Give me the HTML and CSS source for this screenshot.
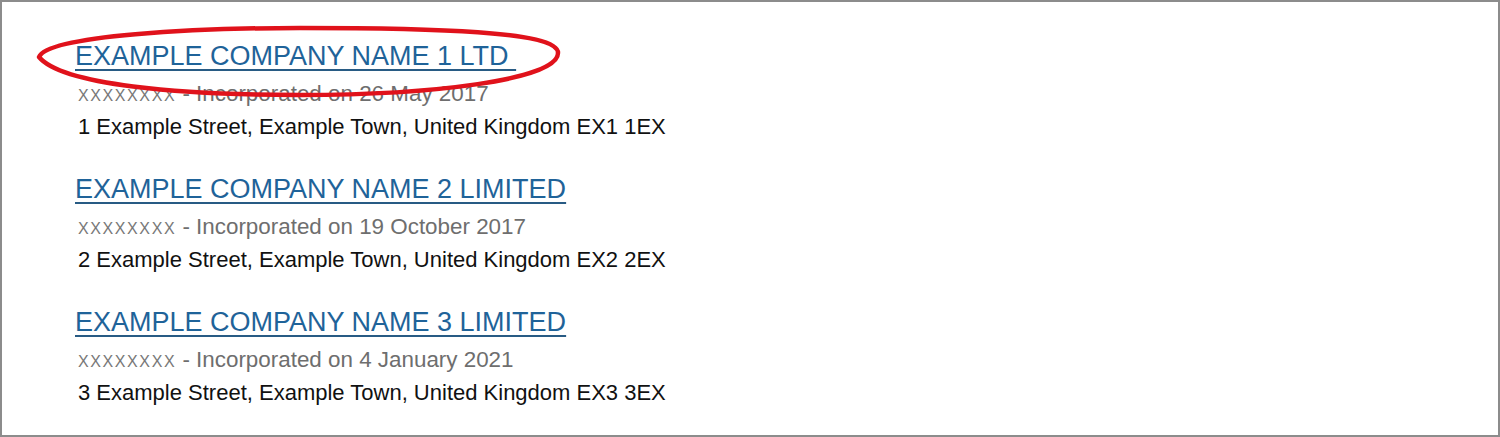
FILE: index.html
```html
<!DOCTYPE html>
<html lang="en">
<head>
<meta charset="utf-8">
<title>Company search results</title>
<link rel="stylesheet" href="styles.css">
</head>
<body>
<div class="frame">
  <ul class="results">
    <li class="result">
      <a class="result-title" href="#">EXAMPLE COMPANY NAME 1 LTD&nbsp;</a>
      <p class="meta"><span class="number">XXXXXXXX</span> - Incorporated on 26 May 2017</p>
      <p class="address">1 Example Street, Example Town, United Kingdom EX1 1EX</p>
    </li>
    <li class="result">
      <a class="result-title" href="#">EXAMPLE COMPANY NAME 2 LIMITED</a>
      <p class="meta"><span class="number">XXXXXXXX</span> - Incorporated on 19 October 2017</p>
      <p class="address">2 Example Street, Example Town, United Kingdom EX2 2EX</p>
    </li>
    <li class="result">
      <a class="result-title" href="#">EXAMPLE COMPANY NAME 3 LIMITED</a>
      <p class="meta"><span class="number">XXXXXXXX</span> - Incorporated on 4 January 2021</p>
      <p class="address">3 Example Street, Example Town, United Kingdom EX3 3EX</p>
    </li>
  </ul>
  <!-- hand-drawn highlight ring around the first result -->
  <svg class="highlight" width="620" height="120" viewBox="0 0 620 120" aria-hidden="true">
    <path d="M39,57 C48,35 200,28 300,28 C430,28 558,31 558,53 C558,80 430,95 300,95 C180,95 62,85 39,57 Z"
          fill="none" stroke="#e0121b" stroke-width="4.5" stroke-linejoin="round"/>
  </svg>
</div>
</body>
</html>
```

FILE: styles.css
```css
html, body {
  margin: 0;
  padding: 0;
  background: #ffffff;
}

.frame {
  position: relative;
  box-sizing: border-box;
  width: 1500px;
  height: 437px;
  border: 2px solid #8c8c8c;
  background: #ffffff;
  font-family: "Liberation Sans", Arial, sans-serif;
}

.results {
  list-style: none;
  margin: 0;
  padding: 36px 0 0 73px;
}

.result {
  margin: 0 0 28px 0;
}

.result-title {
  display: block;
  width: fit-content;
  font-size: 27px;
  line-height: 36px;
  color: #1f6399;
  text-decoration: underline;
  text-decoration-color: #285b84;
  text-decoration-thickness: 2px;
  text-underline-offset: 4px;
}

.meta,
.address {
  margin: 0 0 0 3px;
  font-size: 22px;
  line-height: 33px;
}

.meta {
  margin-top: 3px;
  color: #6e6e6e;
  font-size: 22.4px;
}

.number {
  font-size: 16px;
  line-height: 1;
  letter-spacing: 1.6px;
  color: #787878;
}

.address {
  color: #111111;
}

.highlight {
  position: absolute;
  left: -2px;
  top: -2px;
  pointer-events: none;
}
```
